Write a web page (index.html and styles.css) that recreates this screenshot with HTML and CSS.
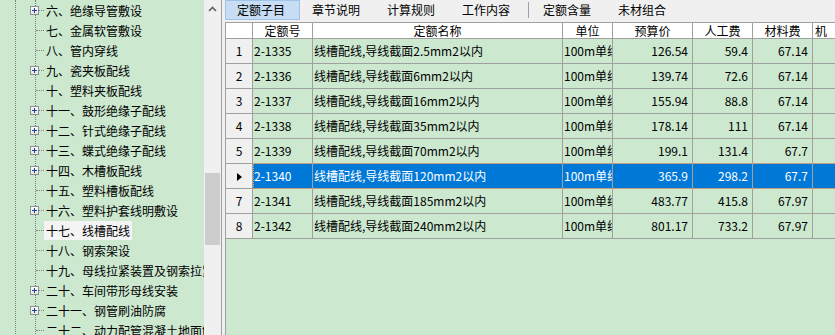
FILE: index.html
```html
<!DOCTYPE html>
<html lang="zh-CN">
<head>
  <meta charset="UTF-8" />
  <title>定额子目</title>
  <link rel="stylesheet" href="styles.css">
</head>
<body>
  <div class="app">

    <!-- chapter tree -->
    <div class="tree">
      <div class="lvl">
        <ul class="kids">
          <li class="node"><span class="plus"></span><span class="label">六、绝缘导管敷设</span></li>
          <li><span class="label">七、金属软管敷设</span></li>
          <li><span class="label">八、管内穿线</span></li>
          <li class="node"><span class="plus"></span><span class="label">九、瓷夹板配线</span></li>
          <li><span class="label">十、塑料夹板配线</span></li>
          <li class="node"><span class="plus"></span><span class="label">十一、鼓形绝缘子配线</span></li>
          <li class="node"><span class="plus"></span><span class="label">十二、针式绝缘子配线</span></li>
          <li class="node"><span class="plus"></span><span class="label">十三、蝶式绝缘子配线</span></li>
          <li class="node"><span class="plus"></span><span class="label">十四、木槽板配线</span></li>
          <li><span class="label">十五、塑料槽板配线</span></li>
          <li class="node"><span class="plus"></span><span class="label">十六、塑料护套线明敷设</span></li>
          <li class="current"><span class="label">十七、线槽配线</span></li>
          <li><span class="label">十八、钢索架设</span></li>
          <li><span class="label">十九、母线拉紧装置及钢索拉紧装置制作安装</span></li>
          <li class="node"><span class="plus"></span><span class="label">二十、车间带形母线安装</span></li>
          <li class="node"><span class="plus"></span><span class="label">二十一、钢管刷油防腐</span></li>
          <li><span class="label">二十二、动力配管混凝土地面刨沟</span></li>
        </ul>
      </div>
    </div>

    <div class="vscroll">
      <div class="up">
        <svg width="9" height="6" viewBox="0 0 9 6"><path d="M1 5 L4.5 1.5 L8 5" fill="none" stroke="#606060" stroke-width="1.6"/></svg>
      </div>
      <div class="thumb"></div>
    </div>

    <!-- quota list -->
    <div class="main">
      <div class="tabs">
        <div class="tab on">定额子目</div>
        <div class="tab">章节说明</div>
        <div class="tab">计算规则</div>
        <div class="tab">工作内容</div>
        <div class="tab-sep"></div>
        <div class="tab">定额含量</div>
        <div class="tab">未材组合</div>
      </div>

      <div class="grid">
        <div class="row head">
          <div class="c"></div>
          <div class="c">定额号</div>
          <div class="c">定额名称</div>
          <div class="c">单位</div>
          <div class="c">预算价</div>
          <div class="c">人工费</div>
          <div class="c">材料费</div>
          <div class="c last"><span>机械费</span></div>
        </div>
        <div class="row">
          <div class="c idx">1</div><div class="c code">2-1335</div><div class="c name">线槽配线,导线截面2.5mm2以内</div><div class="c unit">100m单线</div>
          <div class="c num">126.54</div><div class="c num">59.4</div><div class="c num">67.14</div><div class="c num"></div>
        </div>
        <div class="row">
          <div class="c idx">2</div><div class="c code">2-1336</div><div class="c name">线槽配线,导线截面6mm2以内</div><div class="c unit">100m单线</div>
          <div class="c num">139.74</div><div class="c num">72.6</div><div class="c num">67.14</div><div class="c num"></div>
        </div>
        <div class="row">
          <div class="c idx">3</div><div class="c code">2-1337</div><div class="c name">线槽配线,导线截面16mm2以内</div><div class="c unit">100m单线</div>
          <div class="c num">155.94</div><div class="c num">88.8</div><div class="c num">67.14</div><div class="c num"></div>
        </div>
        <div class="row">
          <div class="c idx">4</div><div class="c code">2-1338</div><div class="c name">线槽配线,导线截面35mm2以内</div><div class="c unit">100m单线</div>
          <div class="c num">178.14</div><div class="c num">111</div><div class="c num">67.14</div><div class="c num"></div>
        </div>
        <div class="row">
          <div class="c idx">5</div><div class="c code">2-1339</div><div class="c name">线槽配线,导线截面70mm2以内</div><div class="c unit">100m单线</div>
          <div class="c num">199.1</div><div class="c num">131.4</div><div class="c num">67.7</div><div class="c num"></div>
        </div>
        <div class="row sel">
          <div class="c idx"><span class="arrow"></span></div><div class="c code">2-1340</div><div class="c name">线槽配线,导线截面120mm2以内</div><div class="c unit">100m单线</div>
          <div class="c num">365.9</div><div class="c num">298.2</div><div class="c num">67.7</div><div class="c num"></div>
        </div>
        <div class="row">
          <div class="c idx">7</div><div class="c code">2-1341</div><div class="c name">线槽配线,导线截面185mm2以内</div><div class="c unit">100m单线</div>
          <div class="c num">483.77</div><div class="c num">415.8</div><div class="c num">67.97</div><div class="c num"></div>
        </div>
        <div class="row">
          <div class="c idx">8</div><div class="c code">2-1342</div><div class="c name">线槽配线,导线截面240mm2以内</div><div class="c unit">100m单线</div>
          <div class="c num">801.17</div><div class="c num">733.2</div><div class="c num">67.97</div><div class="c num"></div>
        </div>
      </div>
    </div>

  </div>
</body>
</html>
```

FILE: styles.css
```css
* {
  box-sizing: border-box;
}

body {
  margin: 0;
  background: #f0f0f0;
  color: #000;
  font-family: "Noto Sans CJK SC", sans-serif;
  font-size: 12px;
}

.app {
  display: flex;
  width: 835px;
  height: 335px;
  overflow: hidden;
}

/* tree */

.tree {
  flex: none;
  width: 204px;
  background: #cce8cf;
  overflow: hidden;
}

.lvl {
  margin-left: 15px;
  border-left: 1px dotted #808080;
  min-height: 100%;
}

.kids {
  list-style: none;
  margin: 0 0 0 19px;
  padding: 0;
  border-left: 1px dotted #808080;
}

.kids li {
  position: relative;
  display: flex;
  align-items: center;
  height: 20px;
  white-space: nowrap;
}

.kids li::before {
  content: "";
  flex: none;
  width: 8px;
  border-top: 1px dotted #808080;
}

.label {
  padding: 0 2px;
  line-height: 19px;
}

.current .label {
  background: #f4f4f4;
}

.plus {
  position: absolute;
  left: -6px;
  top: 6px;
  width: 9px;
  height: 9px;
  border: 1px solid #8e8f8f;
  background: linear-gradient(#ffffff, #e4e4e4);
}

.plus::before,
.plus::after {
  content: "";
  position: absolute;
  background: #1f3f9f;
}

.plus::before {
  left: 1px;
  top: 3px;
  width: 5px;
  height: 1px;
}

.plus::after {
  left: 3px;
  top: 1px;
  width: 1px;
  height: 5px;
}

/* scroll bar */

.vscroll {
  flex: none;
  width: 17px;
  background: #f0f0f0;
  display: flex;
  flex-direction: column;
  align-items: center;
}

.up {
  height: 17px;
  display: flex;
  align-items: center;
  justify-content: center;
}

.thumb {
  width: 15px;
  height: 72px;
  margin-top: 156px;
  background: #cdcdcd;
}

/* right side */

.main {
  flex: 1;
  min-width: 0;
  display: flex;
  flex-direction: column;
  border-left: 1px solid #a0a0a0;
}

.tabs {
  flex: none;
  display: flex;
  height: 22px;
  padding-left: 3px;
}

.tab {
  width: 75px;
  height: 20px;
  padding-left: 12px;
  line-height: 20px;
  white-space: nowrap;
}

.tab.on {
  background: #c6ddf3;
  border: 1px solid #9fc4e7;
  padding-left: 11px;
  line-height: 18px;
}

.tab-sep {
  width: 1px;
  height: 16px;
  margin: 2px 2px 0 3px;
  background: #a0a0a0;
}

.grid {
  flex: 1;
  margin-left: 3px;
  border-left: 1px solid #a0a0a0;
  border-top: 1px solid #a0a0a0;
  background: #cce8cf;
  overflow: hidden;
}

.row {
  display: grid;
  grid-template-columns: 27px 60px 250px 50px 80px 60px 60px 42px;
  width: max-content;
  height: 25px;
}

.c {
  border-right: 1px solid #a0a0a0;
  border-bottom: 1px solid #a0a0a0;
  line-height: 24px;
  white-space: nowrap;
  overflow: hidden;
}

.head {
  height: 16px;
  background: #fff;
}

.head .c {
  line-height: 15px;
  text-align: center;
}

.head .last {
  text-align: left;
  padding-left: 2px;
}

/* only the first glyph fits before the window edge */
.head .last span {
  display: inline-block;
  width: 12px;
  overflow: hidden;
  vertical-align: top;
}

.idx {
  background: #f0f0f0;
  text-align: center;
}

.code,
.name,
.unit {
  padding-left: 1px;
}

.num {
  text-align: right;
  padding-right: 4px;
}

.sel {
  position: relative;
}

.sel .c:not(.idx) {
  background: #0078d7;
  color: #fff;
}

/* focus rectangle drawn over the selected row */
.sel::after {
  content: "";
  position: absolute;
  left: 27px;
  right: -4px;
  top: -1px;
  bottom: 0;
  border: 1px dotted #e39a56;
  pointer-events: none;
}

.arrow {
  display: inline-block;
  vertical-align: middle;
  margin-top: -2px;
  border-left: 5px solid #000;
  border-top: 4px solid transparent;
  border-bottom: 4px solid transparent;
}
```
